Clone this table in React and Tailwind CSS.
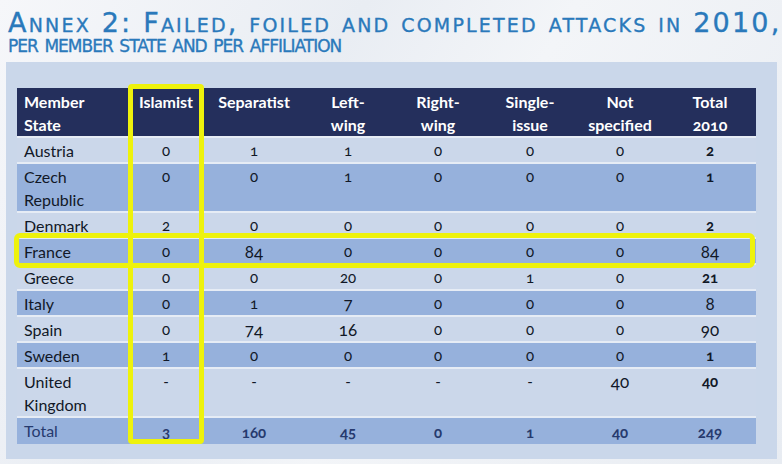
const COLS = [
  { key: "islamist",   label: ["Islamist"],        w: "w-[76px]" },
  { key: "separatist", label: ["Separatist"],      w: "w-[100px]" },
  { key: "left",       label: ["Left-", "wing"],   w: "w-[88px]" },
  { key: "right",      label: ["Right-", "wing"],  w: "w-[92px]" },
  { key: "single",     label: ["Single-", "issue"], w: "w-[92px]" },
  { key: "none",       label: ["Not", "specified"], w: "w-[88px]" },
  { key: "total",      label: ["Total", "2010"],   w: "w-[92px]" },
];

// "*" marks a figure set larger and not bold in the source slide
const ROWS = [
  { state: ["Austria"],           v: ["0", "1", "1", "0", "0", "0", "2"] },
  { state: ["Czech", "Republic"], v: ["0", "0", "1", "0", "0", "0", "1"] },
  { state: ["Denmark"],           v: ["2", "0", "0", "0", "0", "0", "2"] },
  { state: ["France"],            v: ["0", "84*", "0", "0", "0", "0", "84*"] },
  { state: ["Greece"],            v: ["0", "0", "20", "0", "1", "0", "21"] },
  { state: ["Italy"],             v: ["0", "1", "7*", "0", "0", "0", "8*"] },
  { state: ["Spain"],             v: ["0", "74*", "16*", "0", "0", "0", "90*"] },
  { state: ["Sweden"],            v: ["1", "0", "0", "0", "0", "0", "1"] },
  { state: ["United", "Kingdom"], v: ["-", "-", "-", "-", "-", "40*", "40"] },
];

const TOTALS = ["3", "160", "45", "0", "1", "40", "249"];

const font = "font-['Lato','Open_Sans',sans-serif]";

const Title = () => (
  <div className="h-[62px] px-2 pt-[14px] text-[#2a79bb] font-['DejaVu_Sans',sans-serif] [font-variant:small-caps] leading-[18px] [-webkit-text-stroke:0.35px_#2a79bb]">
    <div className="text-[27px] tracking-[2.2px] whitespace-nowrap">Annex 2: Failed, foiled and completed attacks in 2010,</div>
    <div className="mt-[3px] text-[24px] tracking-[-1px] whitespace-nowrap">per member state and per affiliation</div>
  </div>
);

const Cell = ({ x, bold }) => {
  const big = x.endsWith("*");
  const txt = big ? x.slice(0, -1) : x;
  return (
    <td className={`text-center pt-[1px] align-top ${big ? "text-[17px]" : "text-[15px]"} ${bold && !big ? "font-bold" : ""}`}>
      {txt}
    </td>
  );
};

export default function App() {
  return (
    <div className={`w-[782px] h-[464px] overflow-hidden bg-[linear-gradient(120deg,#f6f7fa_0%,#e9edf3_35%,#f3f5f8_55%,#e8ecf2_100%)] ${font}`}>
      <Title />

      <div className="relative ml-[6px] w-[771px] h-[397px] bg-[#cad7ea] px-[11px] pt-[26px]">
        <table className="border-collapse w-[739px] text-[#111827] [font-variant-numeric:oldstyle-nums]">
          <thead>
            <tr className="bg-[#242f5c] text-white text-[16px] leading-[23px]">
              <th className="w-[111px] text-left pl-[7px] pt-[2px] align-top font-bold">Member<br />State</th>
              {COLS.map((c) => (
                <th key={c.key} className={`${c.w} text-center pt-[2px] align-top font-bold`}>
                  {c.label.map((l, i) => <div key={i}>{l}</div>)}
                </th>
              ))}
            </tr>
          </thead>
          <tbody className="text-[16px] leading-[23px]">
            {ROWS.map((r, ri) => (
              <tr key={ri} className={`border-t-2 border-[#e6ecf5] ${ri % 2 ? "bg-[#96b1dc]" : "bg-[#cbd7ea]"}`}>
                <td className="pl-[7px] pt-[1px] align-top">{r.state.map((s, i) => <div key={i}>{s}</div>)}</td>
                {r.v.map((x, i) => <Cell key={i} x={x} bold={i === 6} />)}
              </tr>
            ))}
            <tr className="border-t-2 border-[#e6ecf5] bg-[#96b1dc] text-[#263a6e]">
              <td className="pl-[7px] pt-[1px] align-top">Total</td>
              {TOTALS.map((x, i) => (
                <td key={i} className="text-center pt-[3px] align-top text-[15px] font-bold">{x}</td>
              ))}
            </tr>
          </tbody>
        </table>

        {/* yellow highlight: Islamist column */}
        <div className="absolute left-[122px] top-[22px] w-[76px] h-[360px] border-[5px] border-[#eef20c] rounded-[4px]" />
        {/* yellow highlight: France row */}
        <div className="absolute left-[8px] top-[171px] w-[741px] h-[35px] border-[5px] border-[#eef20c] rounded-[6px]" />
      </div>
    </div>
  );
}
